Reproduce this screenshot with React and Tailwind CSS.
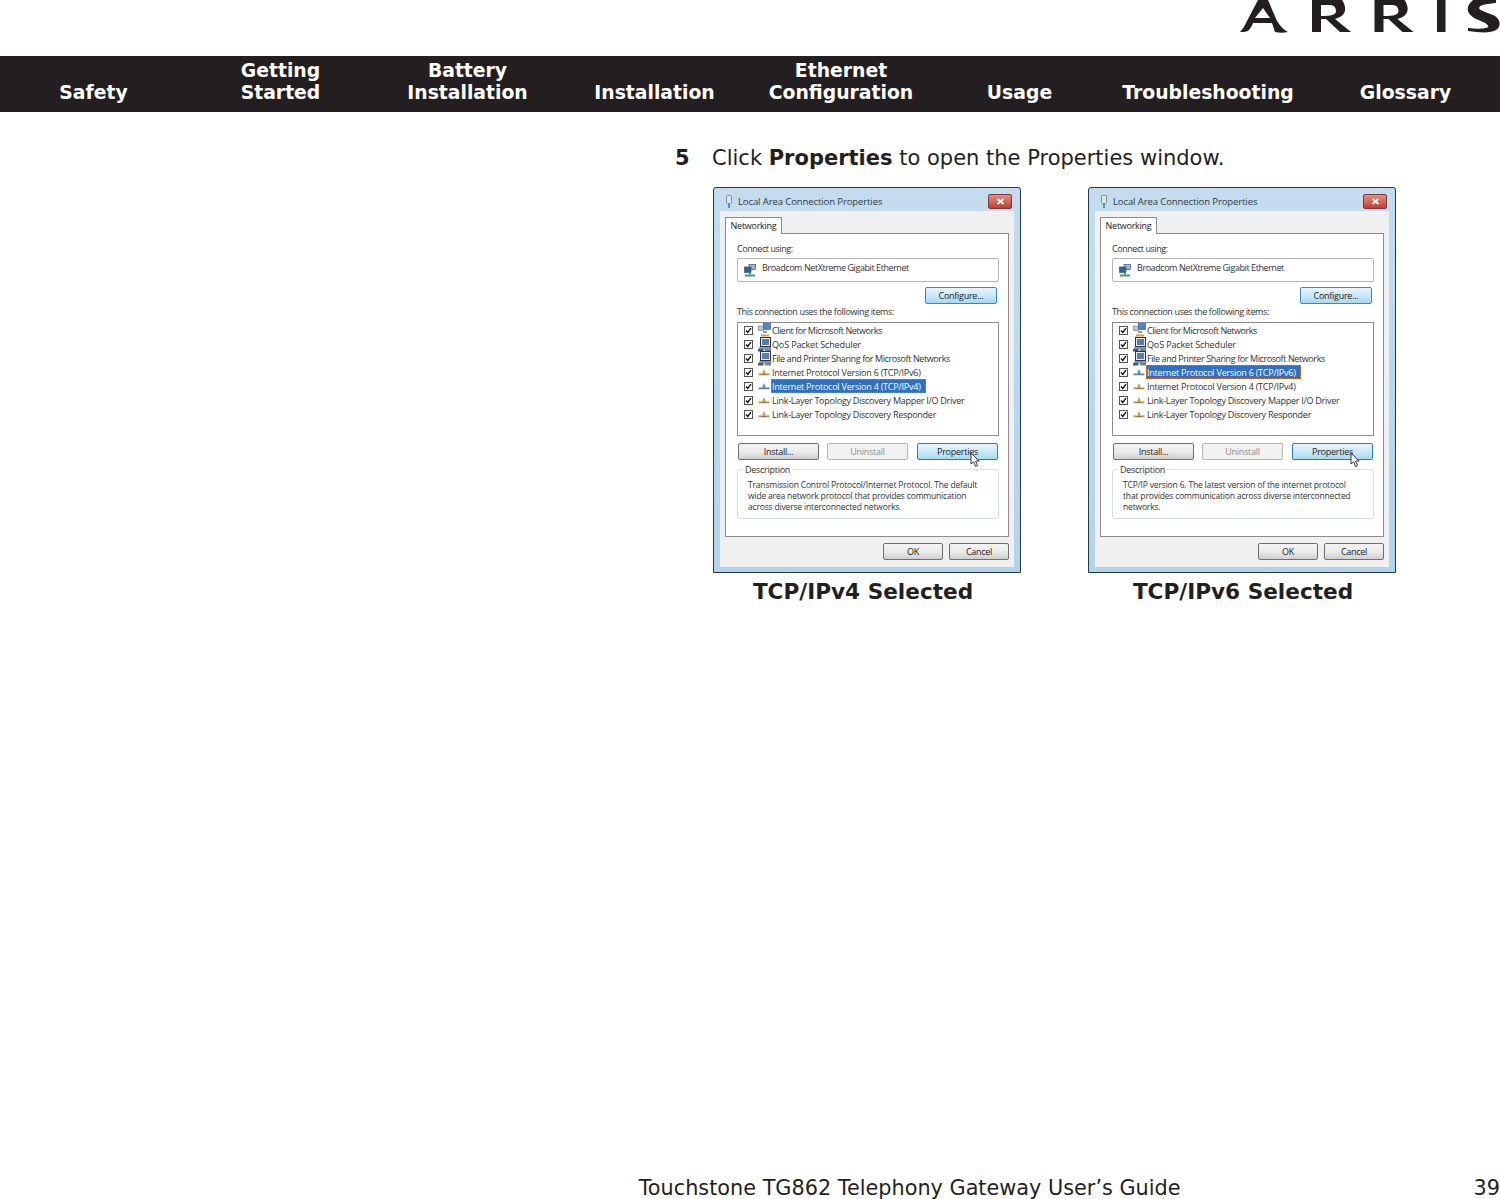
// App.jsx
import React from "react";

const PAGE_FONT = "font-['DejaVu_Sans',Verdana,sans-serif]";
const DIALOG_FONT = "font-['Open_Sans','Noto_Sans',sans-serif]";

const NAV_ITEMS = [
  { lines: ["Safety"], width: "w-[187px]" },
  { lines: ["Getting", "Started"], width: "w-[187px]" },
  { lines: ["Battery", "Installation"], width: "w-[187px]" },
  { lines: ["Installation"], width: "w-[187px]" },
  { lines: ["Ethernet", "Configuration"], width: "w-[186px]" },
  { lines: ["Usage"], width: "w-[171px]" },
  { lines: ["Troubleshooting"], width: "w-[206px]" },
  { lines: ["Glossary"], width: "w-[189px]" },
];

const PROTOCOL_V6 = "Internet Protocol Version 6 (TCP/IPv6)";
const PROTOCOL_V4 = "Internet Protocol Version 4 (TCP/IPv4)";

// tracking differs per row because Open Sans is not Segoe UI
const ROWS = [
  { label: "Client for Microsoft Networks", icon: "client", tracking: "tracking-[-0.05em]" },
  { label: "QoS Packet Scheduler", icon: "computer", tracking: "tracking-[-0.015em]" },
  { label: "File and Printer Sharing for Microsoft Networks", icon: "computer", tracking: "tracking-[-0.045em]" },
  { label: PROTOCOL_V6, icon: "protocol", tracking: "tracking-[-0.025em]" },
  { label: PROTOCOL_V4, icon: "protocol", tracking: "tracking-[-0.025em]" },
  { label: "Link-Layer Topology Discovery Mapper I/O Driver", icon: "protocol", tracking: "tracking-[-0.03em]" },
  { label: "Link-Layer Topology Discovery Responder", icon: "protocol", tracking: "tracking-[-0.03em]" },
];

const R_PATH =
  "M72 0 V32 H81 V19 H86 L100 32 H111 L95 19 C103 17 106 12 105 7 C104 3 103 1 102 0 Z M81 5 H90 C95 5 96 9 96 11 C96 15 91 16 81 16 Z";

function ArrisLogo() {
  return (
    <svg width="260" height="34" viewBox="0 0 260 34" className="block" aria-label="ARRIS">
      <g fill="#231f20">
        <path
          fillRule="evenodd"
          d="M0 32 C3 29 5 25 7 21 L18 0 L28 0 L37 21 C40 26 44 30 48 32 C44 33 39 33 35 32 C34 29 33 26 32 23 L13 23 C12 26 10 29 8 31 C5 32 3 32 0 32 Z M23 8 L15 18 L30 18 Z"
        />
        <path fillRule="evenodd" d={R_PATH} />
        <path fillRule="evenodd" d={R_PATH} transform="translate(62.5 0)" />
        <rect x="197" y="0" width="8.5" height="32" />
        <path d="M233 0 L256 0 L256 3 C248 4 240 4 239 8 C239 11 250 13 255 16 C261 20 261 27 256 30 C252 33 240 33 228 31 L228 28 C236 29 246 29 248 27 C250 24 240 21 234 18 C228 14 224 8 233 0 Z" />
      </g>
    </svg>
  );
}

function Checkbox() {
  return (
    <svg width="9" height="9" viewBox="0 0 9 9" className="shrink-0">
      <rect x="0.5" y="0.5" width="8" height="8" fill="#fff" stroke="#555" />
      <path d="M2 4.5 L3.8 6.5 L7 2.2" fill="none" stroke="#111" strokeWidth="1.4" />
    </svg>
  );
}

function RowIcon({ type, selected }) {
  if (type === "protocol") {
    const tone = selected ? "#3f8fc5" : "#d09a35";
    return (
      <svg width="12" height="12" viewBox="0 0 12 12" className="shrink-0">
        <path d="M1 8.5 H11" stroke="#77716a" strokeWidth="1.4" />
        <path d="M6 3 L8 7.8 H4 Z" fill={tone} />
        <rect x="0.5" y="7.5" width="3" height="1.6" fill={tone} />
        <rect x="8.5" y="7.5" width="3" height="1.6" fill={tone} />
      </svg>
    );
  }
  if (type === "client") {
    return (
      <svg width="13" height="15" viewBox="0 0 13 15" className="shrink-0">
        <rect x="0.5" y="3" width="5" height="4.5" fill="#b9c8d4" stroke="#6f8394" strokeWidth="0.7" />
        <rect x="5.5" y="0.5" width="7" height="6" fill="#4a86d4" stroke="#4a5f78" strokeWidth="0.7" />
        <path d="M5 8 H9 V10 H5 Z" fill="#8d99a5" />
        <path d="M3 12.5 H11" stroke="#d09a35" strokeWidth="2" />
      </svg>
    );
  }
  return (
    <svg width="14" height="15" viewBox="0 0 14 15" className="shrink-0">
      <rect x="2.5" y="0.5" width="10" height="9" fill="#e4e9ee" stroke="#27364a" />
      <rect x="4" y="2" width="7" height="6" fill="#5c7ba6" />
      <path d="M1.5 10.5 H13 V12 H1.5 Z" fill="#9aa6b2" stroke="#33414f" strokeWidth="0.4" />
      <rect x="0" y="12" width="5.5" height="2.5" fill="#2c5ea6" />
      <rect x="7" y="12" width="6" height="2.5" fill="#77838f" />
    </svg>
  );
}

function NetworkAdapterIcon() {
  return (
    <svg width="12" height="13" viewBox="0 0 12 13" className="shrink-0">
      <rect x="5" y="0.5" width="6.5" height="5" fill="#9cb6d4" stroke="#3d566f" strokeWidth="0.7" />
      <rect x="0.5" y="3" width="6.5" height="5.5" fill="#2f5f9f" stroke="#3d566f" strokeWidth="0.7" />
      <path d="M1 11.5 H11" stroke="#3aa35a" strokeWidth="2" />
      <rect x="5" y="8.5" width="2" height="2" fill="#3aa35a" />
    </svg>
  );
}

function Cursor() {
  return (
    <svg width="12" height="16" viewBox="0 0 12 16" className="block">
      <path d="M1 1 L1 12 L3.6 9.8 L5.6 14.5 L7.6 13.6 L5.6 9 L9.2 9 Z" fill="#fff" stroke="#222" strokeWidth="0.9" strokeLinejoin="round" />
    </svg>
  );
}

function DialogButton({ children, width, variant = "plain", className = "" }) {
  const variants = {
    plain: "border-[#6f6f6f] bg-gradient-to-b from-[#f4f4f4] via-[#ebebeb] to-[#cfcfcf] text-[#222]",
    disabled: "border-[#b5b5b5] bg-[#f1f1f1] text-[#8f8f8f]",
    focus: "border-[#2b7fb8] bg-gradient-to-b from-[#e8f5fc] via-[#cbe9f8] to-[#a5d9f1] text-[#222]",
  };
  return (
    <div className={`flex h-[17px] items-center justify-center rounded-[2px] border text-[9px] leading-none tracking-[-0.03em] ${width} ${variants[variant]} ${className}`}>
      {children}
    </div>
  );
}

function ItemRow({ row, selected }) {
  return (
    <div className="flex h-[14px] items-center pl-[6px]">
      <Checkbox />
      <div className="ml-[5px] flex w-[14px] justify-start">
        <RowIcon type={row.icon} selected={selected} />
      </div>
      <span className={`ml-[-1px] flex h-[14px] items-center whitespace-nowrap px-[1px] ${row.tracking} ${selected ? "bg-[#2f6fc4] pr-[5px] text-white outline outline-dotted outline-[#c9782f] -outline-offset-1" : "text-[#333]"}`}>
        {row.label}
      </span>
    </div>
  );
}

function PropertiesDialog({ selected, description, cursorLeft }) {
  return (
    <div className={`flex h-[386px] w-[308px] flex-col rounded-t-[3px] border border-[#1d3a45] bg-gradient-to-b from-[#c5dcee] to-[#b3d3ea] px-[6px] text-[9px] ${DIALOG_FONT}`}>
      {/* title bar */}
      <div className="flex h-[23px] shrink-0 items-center pl-[5px] pt-[4px]">
        <svg width="8" height="14" viewBox="0 0 8 14" className="shrink-0">
          <rect x="1.5" y="0.5" width="5" height="8" rx="1" fill="#dfe8ee" stroke="#7a8d99" />
          <path d="M4 8 V13" stroke="#5f8fb8" strokeWidth="2" />
        </svg>
        <span className="ml-[5px] text-[9.5px] leading-none tracking-[-0.01em] text-[#2c3a44]">Local Area Connection Properties</span>
        <div className="ml-auto mr-[2px] flex h-[15px] w-[24px] items-center justify-center rounded-[2px] border border-[#7d3a35] bg-gradient-to-b from-[#e48f83] to-[#c03c2f]">
          <svg width="9" height="7" viewBox="0 0 9 7">
            <path d="M1.5 1 L7.5 6 M7.5 1 L1.5 6" stroke="#fff" strokeWidth="1.7" />
          </svg>
        </div>
      </div>

      {/* client area */}
      <div className="h-[356px] shrink-0 bg-[#f0f0f0] px-[5px] pt-[6px]">
        <div className="relative z-10 -mb-px flex h-[17px] w-[57px] items-center justify-center border border-b-0 border-[#8c8c8c] bg-white tracking-[-0.03em] text-[#222]">
          Networking
        </div>
        <div className="h-[304px] border border-[#8c8c8c] bg-white pl-[11px] pr-[9px] leading-none text-[#333]">
          <div className="flex h-[24px] items-end pb-[5px] tracking-[-0.05em]">Connect using:</div>
          <div className="flex h-[24px] items-center rounded-[2px] border border-[#b5b5b5] pl-[6px] text-[#333]">
            <NetworkAdapterIcon />
            <span className="ml-[6px] mb-[5px] tracking-[-0.048em]">Broadcom NetXtreme Gigabit Ethernet</span>
          </div>
          <div className="mr-[2px] mt-[5px] flex justify-end">
            <DialogButton width="w-[72px]" variant="focus" className="h-[16px] border-[#2b8fb8]">Configure...</DialogButton>
          </div>
          <div className="flex h-[18px] items-center pb-[3px] tracking-[-0.04em]">This connection uses the following items:</div>
          <div className="h-[114px] border border-[#8c8c8c] bg-white">
            {ROWS.map((row) => (
              <ItemRow key={row.label} row={row} selected={row.label === selected} />
            ))}
          </div>
          <div className="relative mt-[7px] flex gap-[8px] pl-[1px]">
            <DialogButton width="w-[81px]">Install...</DialogButton>
            <DialogButton width="w-[81px]" variant="disabled">Uninstall</DialogButton>
            <DialogButton width="w-[81px]" variant="focus" className="ml-px">Properties</DialogButton>
            <div className={`absolute top-[9px] ${cursorLeft}`}>
              <Cursor />
            </div>
          </div>
          <div className="relative mt-[9px] h-[50px] rounded-[3px] border border-[#d5dfe5] pl-[10px] pt-[9px] text-[8.5px] tracking-[-0.02em] text-[#333]">
            <span className="absolute left-[5px] top-[-5px] bg-white px-[2px] text-[9px] tracking-[-0.03em]">Description</span>
            {description.map((line) => (
              <div key={line} className="h-[11px] whitespace-nowrap leading-[11px]">{line}</div>
            ))}
          </div>
        </div>
        <div className="mt-[6px] flex justify-end gap-[6px]">
          <DialogButton width="w-[60px]">OK</DialogButton>
          <DialogButton width="w-[60px]">Cancel</DialogButton>
        </div>
      </div>
    </div>
  );
}

export default function App() {
  return (
    <div className={`flex min-h-[1199px] flex-col bg-white text-[#231f20] ${PAGE_FONT}`}>
      <header className="flex h-14 justify-end overflow-hidden">
        <ArrisLogo />
      </header>

      <nav className="flex h-14 items-end bg-[#231f20] pb-[8px] text-[18.8px] font-bold leading-[22px] text-white">
        {NAV_ITEMS.map((item) => (
          <div key={item.lines.join(" ")} className={`shrink-0 text-center ${item.width}`}>
            {item.lines.map((line) => (
              <div key={line}>{line}</div>
            ))}
          </div>
        ))}
      </nav>

      <main className="flex-1 pl-[675px] pt-[33px]">
        <div className="flex text-[21px] leading-[26px]">
          <span className="w-[37px] font-bold">5</span>
          <p>
            Click <b>Properties</b> to open the Properties window.
          </p>
        </div>
        <div className="ml-[38px] mt-[16px] flex gap-[67px]">
          <div className="w-[308px]">
            <PropertiesDialog
              selected={PROTOCOL_V4}
              cursorLeft="left-[233px]"
              description={[
                "Transmission Control Protocol/Internet Protocol. The default",
                "wide area network protocol that provides communication",
                "across diverse interconnected networks.",
              ]}
            />
            <div className="mr-[8px] mt-[5px] text-center text-[21.6px] font-bold leading-[28px]">TCP/IPv4 Selected</div>
          </div>
          <div className="w-[308px]">
            <PropertiesDialog
              selected={PROTOCOL_V6}
              cursorLeft="left-[238px]"
              description={[
                "TCP/IP version 6. The latest version of the internet protocol",
                "that provides communication across diverse interconnected",
                "networks.",
              ]}
            />
            <div className="ml-[2px] mt-[5px] text-center text-[21.6px] font-bold leading-[28px]">TCP/IPv6 Selected</div>
          </div>
        </div>
      </main>

      <footer className="flex h-[24px] items-center justify-end pt-[2px] text-[20.8px] leading-none">
        <span>Touchstone TG862 Telephony Gateway User’s Guide</span>
        <span className="ml-[293px]">39</span>
      </footer>
    </div>
  );
}
